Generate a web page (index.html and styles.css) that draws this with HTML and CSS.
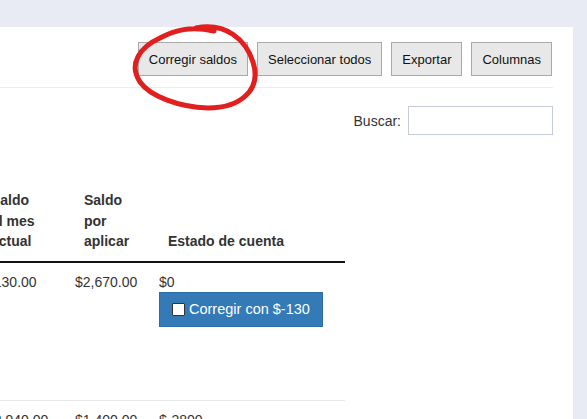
FILE: index.html
```html
<!DOCTYPE html>
<html lang="es">
<head>
  <meta charset="UTF-8" />
  <meta name="viewport" content="width=device-width, initial-scale=1.0" />
  <title>Saldos</title>
  <link rel="stylesheet" href="styles.css">
</head>
<body>
  <div class="topbar"></div>
  <div class="panel">
    <div class="toolbar">
      <button class="btn">Corregir saldos</button>
      <button class="btn">Seleccionar todos</button>
      <button class="btn">Exportar</button>
      <button class="btn">Columnas</button>
    </div>
    <div class="search">
      <label for="buscar">Buscar:</label>
      <input id="buscar" type="text">
    </div>
    <div class="table-wrap">
      <table class="grid">
        <colgroup>
          <col class="c-mes">
          <col class="c-aplicar">
          <col class="c-estado">
        </colgroup>
        <thead>
          <tr><th>Saldo al mes actual</th><th>Saldo por aplicar</th><th>Estado de cuenta</th></tr>
        </thead>
        <tbody>
          <tr class="tall">
            <td>$130.00</td>
            <td>$2,670.00</td>
            <td>
              $0
              <button class="fix"><span class="box"></span>Corregir con $-130</button>
            </td>
          </tr>
          <tr>
            <td>$2,940.00</td>
            <td>$1,400.00</td>
            <td>$-2800</td>
          </tr>
        </tbody>
      </table>
    </div>
  </div>

  <!-- annotation drawn over the screenshot -->
  <svg class="mark" width="587" height="419" viewBox="0 0 587 419">
    <path d="M196 28 C226 22, 246 40, 253 62 C262 90, 240 108, 208 108 C178 107, 150 96, 140 82 C128 64, 140 47, 160 38 C175 30, 190 26, 214 31"
          fill="none" stroke="#e21f1f" stroke-width="5" stroke-linecap="round" stroke-linejoin="round"/>
  </svg>
</body>
</html>
```

FILE: styles.css
```css
body {
  margin: 0;
  background-color: #e8ebf3;
  font-family: "Liberation Sans", Arial, sans-serif;
  font-size: 14px;
  color: #333;
  overflow: hidden;
}
.topbar {
  height: 27px;
}
.panel {
  width: 573px;
  height: 392px;
  background-color: #fff;
  overflow: hidden;
}
.toolbar {
  display: flex;
  justify-content: flex-end;
  gap: 9px;
  margin-right: 20px;
  padding: 15px 1px 11px 0;
  border-bottom: 1px solid #ececec;
}
.btn {
  height: 34px;
  padding: 0 10px;
  font-family: inherit;
  font-size: 13px;
  color: #111;
  background-color: #e8e8e8;
  border: 1px solid #a9a9a9;
  border-radius: 0;
}
.search {
  display: flex;
  justify-content: flex-end;
  align-items: center;
  gap: 7px;
  margin: 18px 20px 0 0;
}
.search input {
  width: 145px;
  height: 29px;
  box-sizing: border-box;
  border: 1px solid #c5cbd8;
  padding: 4px 6px;
  font: inherit;
}
.table-wrap {
  margin-top: 45px;
  overflow: hidden;
}
.grid {
  margin-left: -19px;
  width: 364px;
  table-layout: fixed;
  border-collapse: collapse;
}
.c-mes {
  width: 86px;
}
.c-aplicar {
  width: 84px;
}
.c-estado {
  width: 194px;
}
.grid th {
  text-align: left;
  vertical-align: bottom;
  font-weight: bold;
  line-height: 20.5px;
  padding: 10px 17px 9px 17px;
  border-bottom: 2px solid #111;
}
.grid th:first-child {
  padding-left: 10px;
  padding-right: 24px;
}
.grid td {
  vertical-align: top;
  line-height: 20px;
  padding: 9px 8px;
  border-top: 1px solid #e8e8e8;
  white-space: nowrap;
}
.grid td:first-child {
  padding-left: 5px;
}
.grid tr.tall td {
  height: 119px;
}
.fix {
  display: flex;
  align-items: center;
  gap: 4px;
  height: 35px;
  padding: 0 12px;
  font-family: inherit;
  font-size: 14.5px;
  white-space: nowrap;
  color: #fff;
  background-color: #337ab7;
  border: 1px solid #2e6da4;
  border-radius: 0;
}
.box {
  width: 11px;
  height: 11px;
  background-color: #fff;
  border: 1px solid #333;
  border-radius: 1px;
}
.mark {
  position: absolute;
  top: 0;
  left: 0;
  pointer-events: none;
}
```
